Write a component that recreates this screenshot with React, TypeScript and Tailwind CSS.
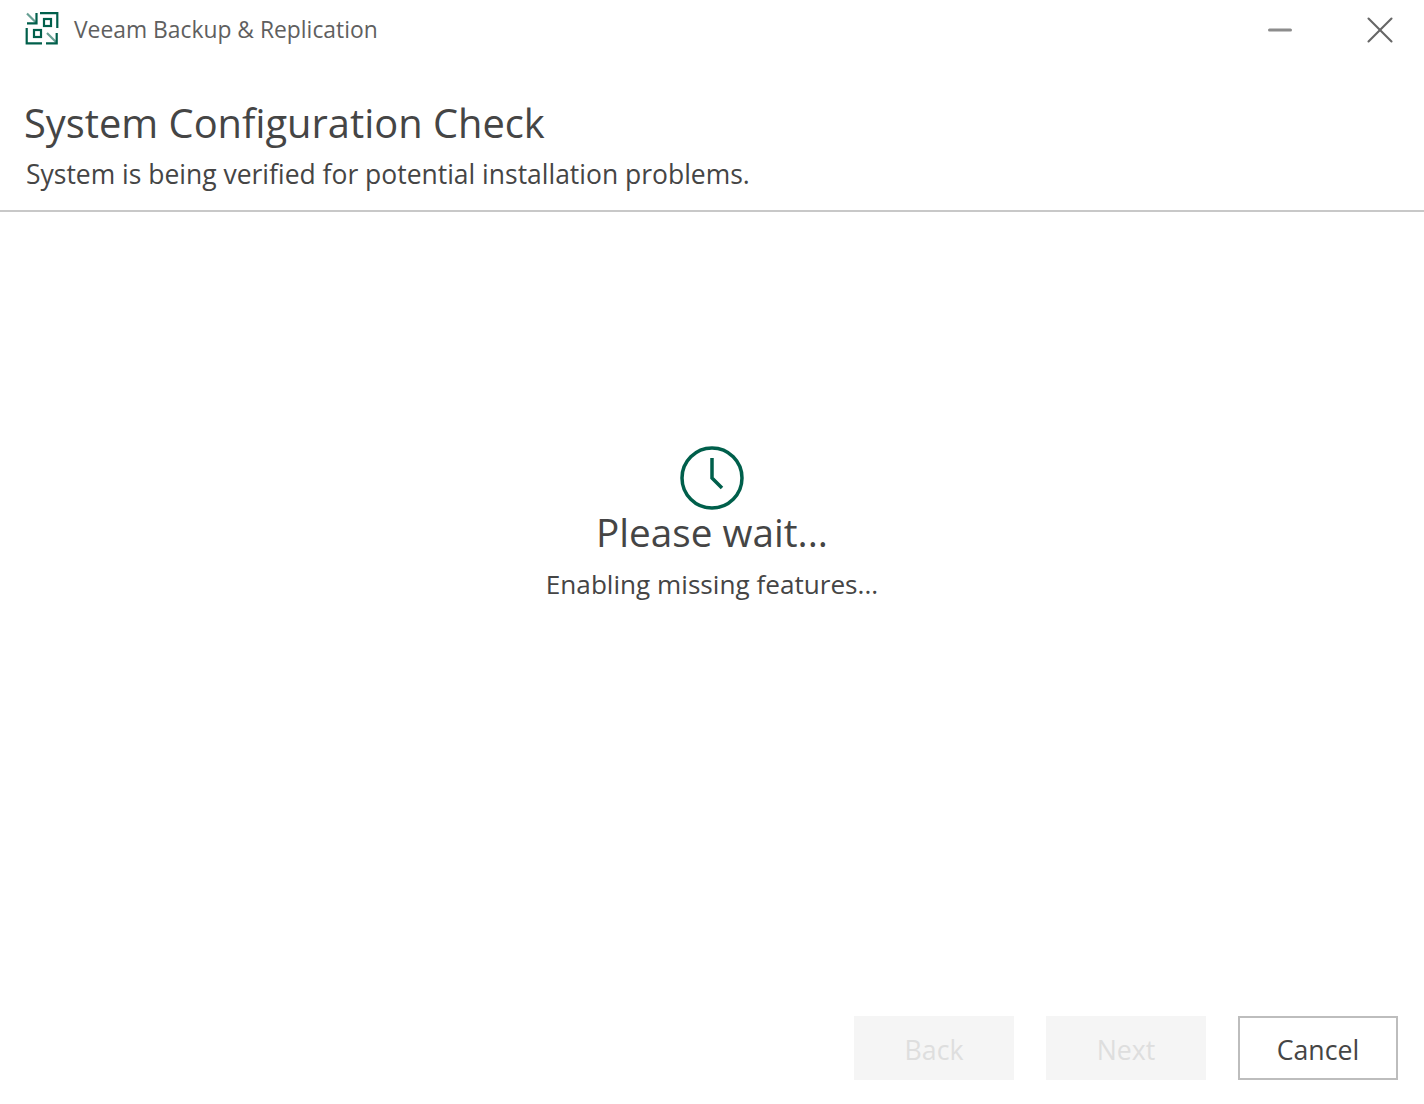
import { Minus, X } from 'lucide-react';

function Logo() {
  return (
    <svg width="34" height="34" viewBox="0 0 34 34" fill="none" stroke="#005f4b" strokeWidth="2.2" className="shrink-0 -mt-[2px]">
      <path d="M11.5 1V11.3H2" />
      <path d="M2 1.5L11 10.5" strokeOpacity="0.6" />
      <path d="M15 1.2H32.3V16" />
      <rect x="19" y="7" width="7" height="7" />
      <path d="M1.7 16V31.3H17" />
      <rect x="9" y="18" width="7" height="7" />
      <path d="M31.7 21V31.3H21" />
      <path d="M22 21L31 30" strokeOpacity="0.6" />
    </svg>
  );
}

function ClockIcon() {
  return (
    <svg width="64" height="64" viewBox="0 0 64 64" fill="none" stroke="#005f4b" strokeWidth="3.5">
      <circle cx="32" cy="32" r="30" />
      <path d="M32 12V32L42 42" />
    </svg>
  );
}

export default function App() {
  return (
    <div className="w-[1424px] h-[1104px] bg-white flex flex-col text-[#454545] font-['Open_Sans','Noto_Sans',sans-serif]">
      {/* title bar */}
      <div className="h-[60px] flex items-center pl-[25px] pr-[21px]">
        <Logo />
        <span className="ml-[15px] text-[22.85px] text-[#5f5f5f]">Veeam Backup &amp; Replication</span>
        <div className="ml-auto flex items-center gap-[59px]">
          <Minus className="w-[36px] h-[36px] text-[#8c8c8c]" strokeWidth={2} />
          <X className="w-[46px] h-[46px] text-[#666666]" strokeWidth={1.1} />
        </div>
      </div>

      {/* header */}
      <div className="h-[152px] border-b-2 border-[#c8c8c8] pl-[24px]">
        <h1 className="mt-[36px] text-[39.85px] leading-[54px] font-normal">System Configuration Check</h1>
        <p className="mt-[7px] pl-[2px] text-[26.47px] leading-[34px]">System is being verified for potential installation problems.</p>
      </div>

      {/* progress */}
      <div className="flex-1 flex flex-col items-center pt-[234px]">
        <ClockIcon />
        <div className="text-[38.7px] leading-[44px]">Please wait...</div>
        <div className="mt-[12px] text-[26.15px] leading-[36px]">Enabling missing features...</div>
      </div>

      {/* buttons */}
      <div className="flex justify-end gap-[32px] pr-[26px] pb-[24px]">
        <button className="w-[160px] h-[64px] pt-[4px] bg-[#f5f5f5] text-[#dedede] text-[26.7px]">Back</button>
        <button className="w-[160px] h-[64px] pt-[4px] bg-[#f5f5f5] text-[#dedede] text-[26.7px]">Next</button>
        <button className="w-[160px] h-[64px] pt-[4px] border-2 border-[#bdbdbd] text-[26.7px]">Cancel</button>
      </div>
    </div>
  );
}
